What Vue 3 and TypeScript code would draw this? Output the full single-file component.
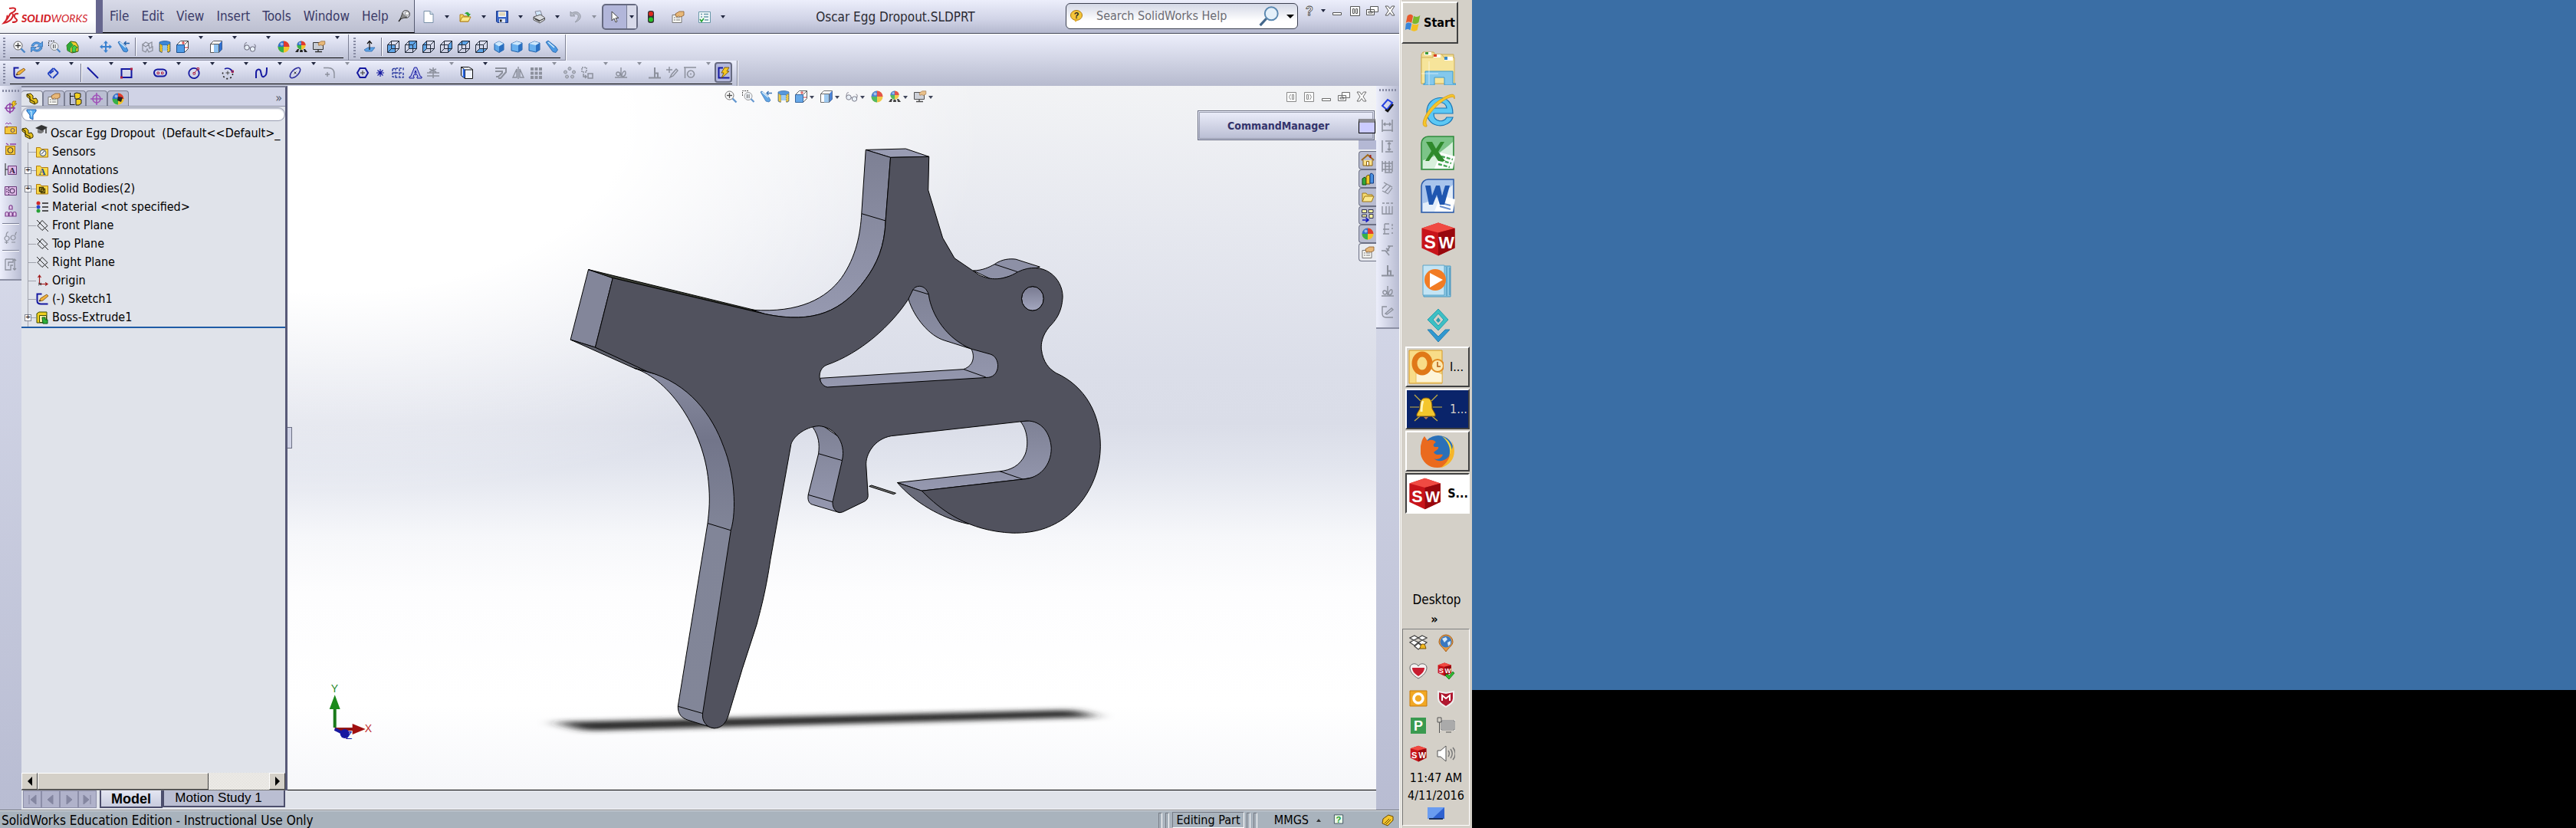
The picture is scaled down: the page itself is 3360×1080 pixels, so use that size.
<script setup lang="ts">
interface Tool { icon: string; label: string; menu?: boolean; dim?: boolean; sep?: boolean }

const GREY = '#8c909c'

function cube(face: string): string {
  const f = (p: string) => `<path d="${p}" fill="#5ea4e6"/>`
  const faces: Record<string, string> = {
    front: f('M.5 5.500h10v10h-10z'),
    back: f('M5.500.5h10v10h-10z'),
    left: f('M.5 5.500l5-5v10l-5 5z'),
    right: f('M10.500 5.500l5-5v10l-5 5z'),
    top: f('M.5 5.500l5-5h10l-5 5z'),
    bottom: f('M.5 15.500l5-5h10l-5 5z'),
  }
  return `${faces[face]}<path d="M.5 5.500h10v10h-10zM5.500.5h10v10h-10zM.5 5.500l5-5M10.500 5.500l5-5M.5 15.500l5-5M10.500 15.500l5-5" fill="none" stroke="#222a3a"/>`
}

const iso = '<path d="M8 1l6 3v8l-6 3.500-6-3.500V4z" fill="#5ca6e8" stroke="#1f5fa8"/><path d="M8 1l6 3-6 3.500L2 4z" fill="#cfe8fc"/><path d="M8 7.500L14 4v8l-6 3.500z" fill="#2a6fc0"/>'
const iso2 = '<path d="M1 4l7-3 7 2v9l-5 3-9-2z" fill="#6ab0ee" stroke="#1f5fa8"/><path d="M1 4l7-3 7 2-5 3z" fill="#cfe8fc"/><path d="M10 6l5-3v9l-5 3z" fill="#2b70c2"/>'
const ball = '<circle cx="8" cy="8" r="7.500" fill="#f1c32c"/><path d="M8 8V.5A7.500 7.500 0 0 1 15.500 8z" fill="#e03a30"/><path d="M8 8V.5A7.500 7.500 0 0 0 .5 8z" fill="#2f6fd0"/><path d="M8 8v7.500A7.500 7.500 0 0 1 .5 8z" fill="#35b04a"/><circle cx="5.500" cy="4.500" r="2" fill="#fff" opacity=".5"/>'
const hand = '<path d="M5 4l5-3h6v5l-4 2-3-1-3 1z" fill="#e8b878" stroke="#8a5a28" stroke-width=".8"/>'
const part = '<path d="M1 2l5-1 3 3v4l4-1 2 3v3l-4 2-6-3V8L1 5z" fill="#e6c21e" stroke="#3a3000"/><path d="M1 2l4 3v4l6 3v3" fill="none" stroke="#3a3000" stroke-width="1.200"/>'
const swCube = '<path d="M8 .5l7.500 2.500v9L8 15.500.5 12V3z" fill="#c8141a"/><path d="M8 .5l7.500 2.500L8 5 .5 3z" fill="#f04a42"/><path d="M8 5l7.500-2v9L8 15.500z" fill="#98080e"/><text x="4.200" y="12" text-anchor="middle" font-family="Liberation Sans, sans-serif" font-weight="700" font-size="8" fill="#fff">S</text><text x="11.700" y="12" text-anchor="middle" font-family="Liberation Sans, sans-serif" font-weight="700" font-size="7.500" fill="#fff">W</text>'
const g = (d: string, w = 1.5) => `<path d="${d}" fill="none" stroke="${GREY}" stroke-width="${w}"/>`
const n = (d: string, w = 1.6) => `<path d="${d}" fill="none" stroke="#1418a0" stroke-width="${w}"/>`
const yellow = (inner: string) => `<path d="M.5 2.500h5l1.500 2h8.500v10.500h-15z" fill="#f8d848" stroke="#b07a10"/>${inner}`

const icons: Record<string, string> = {
  zoomFit: '<circle cx="6.500" cy="6.500" r="5.500" fill="#fff" stroke="#555"/><path d="M6.500 3v7M3 6.500h7" stroke="#333" stroke-width="1.300"/><path d="M10.500 10.500l5 5" stroke="#4a86c8" stroke-width="2.400"/>',
  rotate: '<path d="M1 7c1-5 8-7 12-3l2.500-3v7h-7l2.500-2.500C8 3 5 4 4 7zM15 9c-1 5-8 7-12 3l-2.500 3V8.500h7L5 11c3 2 6 1 7-2z" fill="#5aa0e4" stroke="#1f5fa8" stroke-width=".7"/>',
  zoomArea: '<path d="M.5 7V.5H8" stroke="#333" stroke-dasharray="2 1" fill="none"/><circle cx="8" cy="7.500" r="5" fill="#eef2f8" stroke="#888"/><path d="M6.500 5v5M9 5v5" stroke="#444"/><path d="M11.500 11l4 4" stroke="#4a86c8" stroke-width="2.200"/>',
  section3d: '<path d="M1 6l5-5 7 1 3 5v7l-8 2-6-3z" fill="#f2cc30" stroke="#3a5a10"/><path d="M1 6l5-5 4 5-4 4v5l-4-2z" fill="#2fa83a"/><path d="M8 9l3-3 4 3-2 1v5H8z" fill="#44d04a" stroke="#145a1a" stroke-width=".7"/>',
  pan: '<path d="M8 0l3 3.500H9V7h3.500V5L16 8l-3.500 3V9H9v3.500h2L8 16l-3-3.500h2V9H3.500v2L0 8l3.500-3v2H7V3.500H5z" fill="#3b82d0"/>',
  prev: '<path d="M1 2l2-1 9 8 2 4-2 2-4-1z" fill="#4a98e2" stroke="#1f5fa8" stroke-width=".8"/><path d="M3 2l8 7" stroke="#d8eefc" stroke-width="1.500"/><path d="M9 3.500h7M11.500 1L9 3.500 11.500 6" stroke="#1f5fa8" stroke-width="1.400" fill="none"/>',
  ghost: g('M2 5l4-3 4 2 4-2v6M2 5v8l4 2 2-4 2 4 5-2V8l-4 2-1-5-4 3z', 1.3),
  sectionView: '<path d="M1 2c4-2 10-2 14 0v12l-3 1.500V6H4v9.500L1 14z" fill="#3a86d6" stroke="#1b4f90" stroke-width=".7"/><path d="M5 6h6v7H5z" fill="#8cc4f2"/><path d="M1.500 4v10l3 1V6zM11.500 6v9l3-1V4z" fill="#f0c428" stroke="#6a5000" stroke-width=".6" stroke-dasharray="1.500 1"/>',
  viewOrient: '<path d="M.5 5.500l5-5h10v10l-5 5" fill="#fff" stroke="#444"/><path d="M.5 5.500h10v10h-10z" fill="#4f9ce6" stroke="#1b4f90"/><path d="M10.500 5.500l5-5" stroke="#444"/><path d="M9 1v4M7 3h4M11 9h4" stroke="#d02020"/>',
  display: '<path d="M.5 4.500l4-4h11v11l-4 4H.5z" fill="#fff" stroke="#555"/><path d="M11.500 4.500l4-4v11l-4 4z" fill="#2e6fd0"/><path d="M5 4.500h6.500v11H5z" fill="#8fc2f0"/><path d="M.5 4.500h11v11" fill="none" stroke="#555"/>',
  glasses: '<circle cx="4" cy="9" r="3.200" fill="#e8f0f8" stroke="#667"/><circle cx="11.500" cy="11" r="3.200" fill="#e8f0f8" stroke="#667"/><path d="M1 8c0-5 2-6 3-5M7 9l2 1M14.500 10c1-3 1-5-1-5" fill="none" stroke="#667"/>',
  ball,
  scene: `<g transform="translate(2 0) scale(.75)">${ball}</g><path d="M0 15l3-4h2l-1 4zM6 15l.5-3h3l.5 3zM12 15l-1-4h2l3 4z" fill="#222"/>`,
  viewSettings: `<path d="M.5 2.500h13v9H.5z" fill="#c8ccd4" stroke="#333"/><path d="M3 14.500h9M7 12v2" stroke="#333" stroke-width="1.400"/><g transform="translate(3 0) scale(.8)">${hand}</g>`,
  normalTo: '<path d="M1 12l5-3h9l-4 5H3z" fill="#5ea4e6" stroke="#1f5fa8" stroke-width=".7"/><path d="M8 12V1M5 4l3-3.500L11 4" stroke="#111" fill="none" stroke-width="1.200"/>',
  cFront: cube('front'), cBack: cube('back'), cLeft: cube('left'), cRight: cube('right'), cTop: cube('top'), cBottom: cube('bottom'),
  iso, iso2,
  scope: '<path d="M0 2l3-2 10 8 2.500 4-2.500 3.500-4-1z" fill="#4a98e2" stroke="#1f5fa8" stroke-width=".8"/><path d="M3 2l8 7" stroke="#d8eefc" stroke-width="1.600"/>',
  sketch: '<path d="M7.500 1.500h-6v9c0 3 2 4 5 4h9" fill="none" stroke="#1418a0" stroke-width="2"/><path d="M4 11l2-4 8-5 2 2-7 6z" fill="#f0b23c" stroke="#7a4a10" stroke-width=".8"/><path d="M4 11l1-2 1.500 1.500z" fill="#222"/>',
  dim: '<path d="M1.500 9l7-7M8 15l7-7M1.500 9l5 5.500M9 2l6 6M4 9l5-4" fill="none" stroke="#1e3fc0" stroke-width="1.800"/>',
  line: n('M1 1l14 14', 2),
  rect: `${n('M1.500 3h13v11h-13z', 2)}<path d="M13 1.500h3v3h-3zM0 12.500h3v3H0z" fill="#b02040"/>`,
  slot: `${n('M4.500 3.500h7a4.500 4.500 0 0 1 0 9h-7a4.500 4.500 0 0 1 0-9z', 2)}<path d="M4 7h2.500v2.500H4zM9.500 7H12v2.500H9.500z" fill="none" stroke="#b02040"/>`,
  circle: `<circle cx="8" cy="8.500" r="6.700" fill="none" stroke="#1418a0" stroke-width="1.800"/><path d="M7 7.500h2.500V10H7zM12 1.500h2.500V4H12zM9 7.500l3.500-4" fill="none" stroke="#b02040"/>`,
  arc: `${n('M4 3A7 7 0 0 1 14.500 8')}<path d="M14.500 9A6.500 6.500 0 1 1 3 5" fill="none" stroke="#222" stroke-width="1.600" stroke-dasharray="2 3"/><path d="M8 5.500v5M5.500 8h5" stroke="#444"/><path d="M13 5h2.500v2.500H13z" fill="none" stroke="#b02040"/>`,
  spline: n('M1 15V8c0-5 5-6 6-2s1 8 4 7 4-3 4-12', 2),
  ellipse: `<ellipse cx="8" cy="8" rx="8.500" ry="4.200" transform="rotate(-45 8 8)" fill="none" stroke="#2c2c9c" stroke-width="1.600"/><path d="M6.500 6.500l3 3M9.500 6.500l-3 3" stroke="#444"/>`,
  fillet: g('M1 1.500h6c5 0 8 3 8 8V15M6 7v6M3 10h6', 1.4),
  polygon: `${n('M4.500 2h7L15 8l-3.500 6h-7L1 8z', 2)}<path d="M8 5v6M5 8h6" stroke="#333"/>`,
  point: n('M8 3v10M3 8h10M4.500 4.500l7 7M11.500 4.500l-7 7', 1.2),
  grid: '<path d="M1 3l4-1h10v4M1 3v10l4 1h10V8M1 8h14M5 2v12M10 3v10" stroke="#2c3ca0" stroke-width="1.400" stroke-dasharray="3 1.500" fill="none"/>',
  text: '<path d="M6.500 1h3l5 12h1.500v2h-6v-2h1l-1-2.500H6L5 13h1v2H0v-2h1.500z" fill="#b8bce8" stroke="#1418a0"/><path d="M8 5l-1.200 3.500h2.400z" fill="#fff" stroke="#1418a0"/>',
  trim: g('M0 8h16M0 12h16M8 1v14M3 3l9 4M12 3L3 7'),
  convert: '<path d="M.5.5h10l5 3v12h-10l-5-4z" fill="#eef2fb" stroke="#111"/><path d="M5.500 4v11.500M.5.500l5 3.500h10" stroke="#111" fill="none"/><path d="M4 3v11" stroke="#2a68e8" stroke-width="2.600"/>',
  offset: g('M1 2h14v5l-7 8H5M1 6h9v2l-5 5H2', 2),
  mirror: g('M8 0v16M6 3L1 14h5zM10 3l5 11h-5z', 1.4),
  dots: `<path d="M1 1h4v4H1zM6.500 1h4v4h-4zM12 1h4v4h-4zM1 6.500h4v4H1zM6.500 6.500h4v4h-4zM12 6.500h4v4h-4zM1 12h4v4H1zM6.500 12h4v4h-4zM12 12h4v4h-4z" fill="${GREY}"/>`,
  ring: `<g fill="#b8bcc8" stroke="${GREY}"><circle cx="8" cy="2.500" r="2"/><circle cx="2.500" cy="7" r="2"/><circle cx="13.500" cy="7" r="2"/><circle cx="4.500" cy="13" r="2"/><circle cx="11.500" cy="13" r="2"/></g>`,
  move: `<path d="M1 1h6v6H1z" fill="none" stroke="${GREY}" stroke-width="1.500" stroke-dasharray="2 1"/>${g('M9 9h6v6H9zM3 9v4h4M5 11l2 2-2 2', 1.5)}`,
  relations: g('M0 14h16M8 1v12M5 12c-4 0-4-5-1-5s4 4 1 5zM9 12c0-5 5-9 5-4s-4 5-5 4z', 1.4),
  perp: g('M0 14.500h16M8 1v13M8 8.500h4v6', 2),
  repair: g('M4 0v8M0 4h8M5 14l2-4 6-7 2 2-6 7z', 1.4),
  quick: g('M0 1h16M1.500 1v14M9 5a4.500 4.500 0 1 0 .1 0M9 8.500v2'),
  rapid: '<path d="M7 1.500H1.500v13h14" fill="none" stroke="#1418a0" stroke-width="2"/><path d="M9 1l6 0-3 5h3L5 15l3-7H5z" fill="#f6c820" stroke="#6a4a00" stroke-width=".8"/>',
  doc: '<path d="M2 .5h8l4 4v11H2z" fill="#fff" stroke="#7890a8"/><path d="M10 .5v4h4" fill="#d4e2ee" stroke="#7890a8"/>',
  open: '<path d="M1 14V5h4l1 2h6v7z" fill="#f6d860" stroke="#b08018"/><path d="M1 14l3-6h11l-3 6z" fill="#fbe98a" stroke="#b08018"/><path d="M7 4c2-3 5-3 6 0h2l-3 4-3-4h1.500" fill="#2fa83a"/>',
  save: '<path d="M.5.500h15v15H2l-1.500-1.500z" fill="#3c68c8" stroke="#1c3a88"/><path d="M3 1h10v7H3z" fill="#fff"/><path d="M4 3h8M4 5.500h8" stroke="#b0a060"/><path d="M4 10.500h8v5H4z" fill="#dfe6f4"/><path d="M5 11.500h2.500v3H5z" fill="#222"/>',
  print: '<path d="M3 1l7-1 2 6-7 1z" fill="#cfe4f8" stroke="#889"/><path d="M1 8l9-3 5.500 4v3L9 16l-8-4z" fill="#d8dade" stroke="#555"/><path d="M1 9l8 4 6-3M3 11l6 3" stroke="#222" fill="none"/>',
  undo: '<path d="M1 1v6h6L5 5c4-2 7 0 6 4-.5 2-2 4-4 6 6-2 8-6 7-9-1-4-6-6-11-3z" fill="#b6bac6" stroke="#8c909c" stroke-width=".8"/>',
  pointer: '<path d="M4 1v12l3-3 2 5 2-1-2-4.500h4z" fill="#fff" stroke="#444"/>',
  traffic: '<rect x="4" y="0" width="8" height="16" rx="3" fill="#333"/><circle cx="8" cy="4" r="3" fill="#e02a20"/><circle cx="8" cy="11.500" r="3" fill="#28c028"/>',
  props: `<path d="M1 5.500h12v10H1z" fill="#f6f6f2" stroke="#777"/><path d="M3 9h2M6 9h5M3 12h2M6 12h5" stroke="#777"/>${hand}`,
  list: '<path d="M.5 1.500h15v14H.5z" fill="#f2f8fa" stroke="#6898a8"/><path d="M3 4.500h2M7 4.500h6M3 8h2M7 8h6M8 12h5" stroke="#6898a8" stroke-width="1.300"/><path d="M2 11l2 3 3-4" fill="none" stroke="#20a030" stroke-width="1.600"/>',
  pin: '<circle cx="9.500" cy="5.500" r="5" fill="#d4d6de" stroke="#444"/><path d="M5 4l-3 8 9-3" fill="#888" stroke="#444"/><path d="M3 11l-3 4" stroke="#222" stroke-width="1.400"/><circle cx="11" cy="4.500" r="2.400" fill="#fff" stroke="#555" stroke-width=".6"/>',
  helpBubble: '<ellipse cx="8" cy="7" rx="7.500" ry="6.500" fill="#f4c63a" stroke="#b07a10"/><path d="M5 12l2 4 3-4z" fill="#e0a820"/><text x="8" y="11" text-anchor="middle" font-family="Liberation Sans, sans-serif" font-weight="700" font-size="11" fill="#222">?</text>',
  lens: '<circle cx="10" cy="6" r="5.200" fill="#e4f0fa" stroke="#5a88b0" stroke-width="1.200"/><path d="M6 10l-5 5.500" stroke="#44688c" stroke-width="2"/>',
  helpMark: '<text x="8" y="14" text-anchor="middle" font-family="Liberation Sans, sans-serif" font-weight="700" font-size="16" fill="#fff" stroke="#444" stroke-width=".8">?</text>',
  wMin: '<path d="M2.500 10.500h11v3h-11z" fill="#fff" stroke="#555"/>',
  wPause: '<path d="M2.500 2.500h12v12h-12z" fill="#fff" stroke="#555"/><path d="M5.500 5.500h2v6h-2zM9.500 5.500h2v6h-2z" fill="none" stroke="#555"/>',
  wRestore: '<path d="M5.500 2.500h10v7h-10zM.5 6.500h10v7H.5z" fill="#fff" stroke="#555"/><path d="M3 9h5v2H3z" fill="none" stroke="#555"/>',
  wClose: '<path d="M2 2h3.500L8 5.500 10.500 2H14L10 8l4 6h-3.500L8 10.500 5.500 14H2l4-6z" fill="#fff" stroke="#555"/>',
  wLeft: '<path d="M2.500 2.500h12v12h-12z" fill="#fff" stroke="#777"/><path d="M7.500 5l-2 3.500 2 3.500M9.500 5.500h2v6h-2z" fill="none" stroke="#777"/>',
  wRight: '<path d="M2.500 2.500h12v12h-12z" fill="#fff" stroke="#777"/><path d="M5.500 5.500h2v6h-2zM9.500 5l2 3.500-2 3.500" fill="none" stroke="#777"/>',
  part,
  config: '<path d="M1.500 0v15.500h6M1.500 4.500h5" stroke="#111" fill="none"/><path d="M7 1l3-1 5 1v5l-3 2H8zM9 9l3-1 4 1v5l-3 2H9z" fill="#f2cf20" stroke="#222"/>',
  target: '<circle cx="8" cy="8" r="5" fill="none" stroke="#a050b8" stroke-width="1.600"/><path d="M8 0v16M0 8h16" stroke="#a050b8" stroke-width="1.600"/>',
  dispMgr: `${ball}<path d="M8 5l6 1-2 6-5-2z" fill="#222"/>`,
  funnel: '<path d="M2 2h12v2l-4 5v6l-4-2V9L2 4z" fill="#5ab0f0" stroke="#1a5ab0"/><path d="M6 4h2v7" stroke="#dff2fd" fill="none"/>',
  sensors: yellow('<circle cx="9" cy="9.500" r="4" fill="#eee" stroke="#456"/><path d="M7 11l4-4" stroke="#345"/>'),
  annot: yellow('<text x="8" y="14" text-anchor="middle" font-family="Liberation Serif, serif" font-weight="700" font-size="12" fill="#1c4a90">A</text>'),
  bodies: yellow('<path d="M4.500 6.500h5v5h-5zM6.500 8.500h5v5h-5z" fill="none" stroke="#3a3000" stroke-width="1.300"/>'),
  material: '<circle cx="3" cy="3" r="2.500" fill="#d02828"/><circle cx="3" cy="8" r="2.500" fill="#2848c8"/><circle cx="3" cy="13" r="2.500" fill="#28a038"/><path d="M8 3h8M8 8h8M8 13h8" stroke="#222" stroke-width="1.400"/>',
  plane: '<path d="M8 1.500l7 7-7 6-6-6z M1 1l15 15" fill="none" stroke="#222"/>',
  origin: '<path d="M4.500 1v11M5 12.500h10M2.500 4l2-3 2 3M12 10.500l3 2-3 2" fill="none" stroke="#a01818" stroke-width="1.200"/><path d="M3 11l4 3M7 11l-4 3" stroke="#222"/>',
  extrude: '<path d="M1 3l3-2h10v12l-3 2H1z" fill="#f0d020" stroke="#3a4a00"/><path d="M4.500 5.500h9v9h-9z" fill="#f8f0b0" stroke="#3a4a00"/><path d="M8 8h4v3h3v5H9z" fill="#2fb03a" stroke="#0a5a14"/>',
  cap: '<path d="M0 5l8-4 8 3-7 5z" fill="#333"/><path d="M3 7v4c3 2 6 1 8-1V7L9 9z" fill="#777"/><path d="M14 5v7" stroke="#333" stroke-width="1.500"/>',
  lTarget: '<circle cx="7" cy="9" r="5" fill="none" stroke="#9040a8" stroke-width="1.600"/><path d="M7 2v14M0 9h14" stroke="#9040a8" stroke-width="1.600"/><path d="M11 0h4l-2 3h3l-7 6 2-5H9z" fill="#f6c820" stroke="#7a5a00" stroke-width=".6"/>',
  lTag: '<path d="M.5 6.500h15v9H.5z" fill="#f4c83a" stroke="#a07010"/><circle cx="10.500" cy="11" r="2.500" fill="none" stroke="#5a4a70"/><path d="M1 3l2-2 2 2 2-2 2 2M3 5v3" stroke="#9040a8" fill="none"/>',
  lBox: '<path d="M1.500 4.500h12v11h-12z" fill="#f4c83a" stroke="#a07010"/><circle cx="7.500" cy="10" r="3.500" fill="none" stroke="#333"/><path d="M2 1l3 2M7 2h8" stroke="#9040a8" fill="none" stroke-width="1.500"/>',
  lA: '<path d="M1 0v16M1 8h3" stroke="#222"/><path d="M4.500 3.500h11v11h-11z" fill="#dcb8e4" stroke="#6a3a7a"/><text x="10" y="13" text-anchor="middle" font-family="Liberation Serif, serif" font-weight="700" font-size="11" fill="#302040">A</text>',
  lO: '<path d="M.5 3.500h15v11H.5z" fill="#dcb8e4" stroke="#6a3a7a"/><circle cx="10" cy="9" r="3" fill="none" stroke="#3a2050"/><path d="M5.500 4v10M3 6v6" stroke="#3a2050" stroke-dasharray="2 1"/>',
  lTree: '<path d="M6 6V3c0-3 4-3 4 0v3zM1 15v-4c0-2 4-2 4 0v4zM11 15v-4c0-2 4-2 4 0v4zM6 15v-4c0-2 4-2 4 0v4z" fill="#e4c8ec" stroke="#7a3a8a" stroke-width="1.200"/>',
  lGlass: g('M3 6a3 3 0 1 0 .1 0M11 5a3 3 0 1 0 .1 0M2 6c0-4 2-6 3-5M14 5c0-3 1-4 2-4M0 14h5M2.500 12v4M9 14h5', 1.2),
  lDim: g('M1 1v14h7V9h3M1 1h10v4H5v5M13 1v14M11 3l2-2 2 2M11 13l2 2 2-2', 1.3),
  rDim: '<path d="M1 9l7-8 6 4-7 9z" fill="none" stroke="#2440e0" stroke-width="2"/><path d="M5 14l3 2 7-9" stroke="#111" fill="none" stroke-width="2.500"/>',
  r1: g('M1 0v16M14 0v16M1 14h14M3 6h9M5 4L3 6l2 2M10 4l2 2-2 2'),
  r2: g('M1 0v16M5 1h10M5 15h10M10 3v10M8 5l2-2 2 2M8 11l2 2 2-2'),
  r3: g('M1 0v14M14 0v14M1 3h13M4 7h8M1 11h13M5 0v14M10 0v14M4 15h10'),
  r4: g('M1 9l6-6M4 14l8-9M9 15l5-7M3 1l11 6M1 12l8 4', 1.2),
  r5: g('M1 5v10h5V5M6 15h8V5M10 5v10M1 1h3M6 1h4M12 1h3', 1.3),
  r6: g('M4 1h6M2 8h8M2 14h8M4 1v13M14 1v3M13 7h2M13 13h2', 1.3),
  r7: g('M0 9h5l5 6M7 10l4-7M15 3H8M6 6l4 3', 1.6),
  r10: g('M7 1H1v9c0 3 2 5 5 5h9M5 10l8-7 2 2-8 6z', 1.4),
  home: '<path d="M2 8v7h12V8" fill="#fbe28a" stroke="#8a6010"/><path d="M0 8l8-7 8 7" fill="none" stroke="#a06a18" stroke-width="2"/><path d="M11.500 1v4" stroke="#a02018" stroke-width="2"/><path d="M6.500 9.500h3V15h-3z" fill="#fff" stroke="#8a6010"/>',
  library: '<path d="M1 8l3-2 2 2v8H1z" fill="#30a838" stroke="#0a4a10"/><path d="M6 5l3-2 2 2v10H6z" fill="#f2c82a" stroke="#6a5000"/><path d="M11 2l2-1 2.500 2v11H11z" fill="#4a90e0" stroke="#103a80"/>',
  folder: '<path d="M1 14V3h5l1.500 2H14v3" fill="#f6dc72" stroke="#a07818"/><path d="M1 14l3-7h12l-3 7z" fill="#fbe890" stroke="#a07818"/>',
  palette: '<path d="M.5.500h6v4h-6zM9 .5h6v4H9zM.5 7h6v3h-6zM10 6.500h5v5h-5z" fill="#f4f0a0" stroke="#335"/><path d="M1 14h7M5.500 11L9 14l-3.500 2.500" fill="none" stroke="#1418c0" stroke-width="1.600"/>',
  tag: '<path d="M1 12l1-6 7-5 6 2v5l-7 7z" fill="#f4c62e" stroke="#6a4a00"/><path d="M4 12l6-6M6 13l6-6" stroke="#6a4a00"/>',
  helpBox: '<path d="M.5.500h15v15H.5z" fill="#e8f8e8" stroke="#234"/><text x="8" y="14" text-anchor="middle" font-family="Liberation Sans, sans-serif" font-weight="700" font-size="15" fill="#20a030">?</text>',
}

const tasks: Record<string, string> = {
  flag: '<path d="M3 4c3-3 6-3 8 0L9 14c-3-2-5-2-8 0z" fill="#e8582a"/><path d="M12 4c3 2 6 2 9-1l-2 10c-3 3-6 3-9 1z" fill="#7ab82c"/><path d="M1 15c3-2 5-2 8 0L7 24c-3-2-5-2-7 0z" fill="#3a86d8"/><path d="M10 15c3 2 6 2 9 0l-2 9c-3 2-6 2-9 0z" fill="#f4c020"/>',
  explorer: '<path d="M3 3h14l2 3h24v38H1V6z" fill="#f0dc92" stroke="#c8a850"/><path d="M16 6h12l2 4h14v34H1V10h15z" fill="#f6e49a" stroke="#d0b058"/><path d="M5 3h9v4H5zM17 6h9v4h-9zM31 9h11v5H31z" fill="#fff"/><path d="M6 3h4v3H6z" fill="#3a9a3a"/><path d="M17 6h4v3h-4z" fill="#d83a20"/><path d="M31 9h4v4h-4z" fill="#3a88c8"/><path d="M6 28h36v16h4v2H31V36H18v10H4v-2h2z" fill="#84c8ec" stroke="#3a98cc"/><path d="M11 15v32M1 31h22" stroke="#fff" opacity=".6"/>',
  ie: '<path d="M42 27H17c0 12 14 12 17 5h8c-4 14-33 17-34-7C8 2 42-2 42 27zM17 20h17c-1-10-16-10-17 0z" fill="#5cc8f4" stroke="#1a78b8" stroke-width="1.200"/><path d="M8 44C-4 46 8 20 24 10 38 1 46-1 44 8c0-4-6-4-18 5C12 24 4 38 8 42z" fill="#f6c62a" stroke="#d89a10" stroke-width=".8"/>',
  excel: '<path d="M10 1h33v43H1V10c0-5 4-9 9-9z" fill="#7cc488" stroke="#2f8a3c" stroke-width="1.500"/><path d="M3 32c12-2 26-12 39-24v35H3z" fill="#d8f0dc"/><path d="M26 22l19 5-3 16H18z" fill="#fff"/><path d="M27 27l15 4M25 32l15 4M23 37l15 4" stroke="#4aa858" stroke-width="2.500" stroke-dasharray="5 2"/><path d="M7 8h8l5 9 6-9h5l-8 13 9 12h-9l-6-9-6 9H6l8-13z" fill="#2f8a2c"/>',
  word: '<path d="M10 1h33v43H1V10c0-5 4-9 9-9z" fill="#a8c4ec" stroke="#2a5aa8" stroke-width="1.500"/><path d="M3 32c12-2 26-12 39-24v35H3z" fill="#e4eefa"/><path d="M26 22l19 5-3 16H18z" fill="#fff"/><path d="M27 32l12 3M25 36l14 4" stroke="#6a90d0" stroke-width="2"/><path d="M6 9h7l2 13 5-13h5l3 13 4-13h6l-7 25h-6l-4-13-5 13h-5z" fill="#1f56b0"/>',
  player: '<path d="M4 2h35v40H4z" fill="#8cc8e4" stroke="#4898c0"/><path d="M34 3v38M38 4v36" stroke="#3a88b4"/><path d="M3 1h28v39H3z" fill="#c4e4f4" stroke="#5aa4c8"/><circle cx="19" cy="20" r="14" fill="#f27c24"/><path d="M12 11v19l17-10z" fill="#fff"/>',
  layers: '<path d="M23 2l13 14-13 14-14-14zM23 8l-7 8 7 8 7-8z" fill="#3cc0c4" fill-rule="evenodd" stroke="#2a9cae"/><path d="M23 13l3 4-3 3-3-3z" fill="#2a9cae"/><path d="M9 29h5l9 9 9-9h6L23 45z" fill="#3098d0" stroke="#2a80b0"/>',
  outlook: '<path d="M1 1h43v43H1z" fill="#f8dc88" stroke="#d89a20"/><path d="M10 43V30l18-6 16 8v11z" fill="#fdf4d8" stroke="#e8c060"/><ellipse cx="18" cy="18" rx="10" ry="12" fill="none" stroke="#e07818" stroke-width="7"/><circle cx="38" cy="21" r="8" fill="#fce8b0" stroke="#e08a20" stroke-width="2"/><path d="M38 16v6h4" stroke="#b05a10" fill="none" stroke-width="1.500"/>',
  bell: '<path d="M2 20h12M32 20h12M8 4l8 8M38 4l-8 8M8 38l7-6M38 38l-7-6" stroke="#c8b040" stroke-width="1.200"/><path d="M23 8c7 0 8 6 8 14l4 7v3H11v-3l4-7c0-8 1-14 8-14z" fill="#f4c62c" stroke="#8a5c08"/><path d="M19 12c-2 5-2 10-2 14" stroke="#fff4b8" stroke-width="3" fill="none"/><path d="M20 33h6l-3 3z" fill="#b87858"/>',
  firefox: '<circle cx="23" cy="22" r="20" fill="#2a70b8"/><path d="M28 3c12 6 17 20 8 30 4-10 3-20-8-30z" fill="#f8d838"/><path d="M1 12c1-5 2-6 4-9l4 6c4-2 8-2 11 2-2 1-5 3-2 6h5c1 3-3 4-6 7 3 5 9 2 12 3-3 7-10 7-13 4 8 8 20 4 24-8 2 14-8 21-18 21C4 44-4 27 1 12z" fill="#ea6a1e"/><path d="M39 22c4-4 3-9 1-14 8 14 4 32-14 36 8-5 13-14 13-22z" fill="#f6b62a"/>',
  sw: swCube,
}

const tray: Record<string, string> = {
  dropbox: '<g fill="#fff" stroke="#444" stroke-width="1.300"><path d="M7 2l5 3-6 3-5-3zM17 2l6 3-6 3-5-3zM6 8l6 3-5 4-6-4zM17 8l6 3-5 4-6-4z"/><path d="M7 16l5-4 5 4-5 4z"/></g><path d="M18 13c3 0 3 3 4 6h-8c1-3 1-6 4-6z" fill="#f0b820" stroke="#7a5000"/>',
  globe: '<path d="M12 23c-4-6-9-8-9-13a9 9 0 0 1 18 0c0 5-5 7-9 13z" fill="#e89a40" stroke="#a8601a"/><circle cx="12" cy="10" r="7.500" fill="#3a78c0"/><path d="M7 6l5-2 2 3-4 4zM14 11l4-2v4l-3 3z" fill="#d4e8f8"/>',
  heart: '<path d="M12 22C5 18 1 13 1 8c0-6 9-7 11-2 2-5 11-4 11 2 0 5-4 10-11 14z" fill="#f4f0f0" stroke="#666"/><path d="M12 19c-5-3-8-7-8-11h16c0 4-3 8-8 11z" fill="#c81c30"/>',
  swOk: `<g transform="translate(1 1) scale(1.150)">${swCube}</g><path d="M11 18l3-2 2 3 5-6 2 2-7 8z" fill="#30c030" stroke="#0a6a14" stroke-width=".8"/>`,
  out: '<path d="M1 2h22v20H1z" fill="#f2a824" stroke="#c87a08"/><circle cx="12" cy="12" r="6" fill="none" stroke="#fff" stroke-width="3.500"/>',
  shield: '<path d="M2 3l10 2 10-2v9c0 5-5 8-10 11C7 20 2 17 2 12z" fill="#b01830" stroke="#eee" stroke-width="2"/><path d="M7 15V8l5 4 5-4v7" fill="none" stroke="#fff" stroke-width="2"/>',
  pBox: '<path d="M2 1h20v21H2z" fill="#3a9a50"/><text x="12" y="18" text-anchor="middle" font-family="Liberation Sans, sans-serif" font-weight="700" font-size="18" fill="#fff">P</text>',
  net: '<path d="M6 5h17v12H6z" fill="#aaa" stroke="#fff" stroke-width="2"/><path d="M6 5h17v12H6zM12 20h7M1 1h5v6H1zM3.500 7v14" fill="none" stroke="#555"/>',
  sw: `<g transform="translate(1 1) scale(1.380)">${swCube}</g>`,
  vol: '<path d="M1 8h4l7-6v20l-7-6H1z" fill="#fff" stroke="#555"/><path d="M15 8c2 3 2 5 0 8M18 6c3 4 3 8 0 12M21 4c4 5 4 11 0 16" fill="none" stroke="#777" stroke-width="1.400"/>',
}

const menus = ['File', 'Edit', 'View', 'Insert', 'Tools', 'Window', 'Help']

const standardTools: Tool[] = [
  { icon: 'doc', label: 'New', menu: true }, { icon: 'open', label: 'Open', menu: true },
  { icon: 'save', label: 'Save', menu: true }, { icon: 'print', label: 'Print', menu: true },
  { icon: 'undo', label: 'Undo', menu: true, dim: true },
]

const viewTools: Tool[] = [
  { icon: 'zoomFit', label: 'Zoom to Fit' }, { icon: 'rotate', label: 'Rotate View' }, { icon: 'zoomArea', label: 'Zoom to Area' },
  { icon: 'section3d', label: '3D Drawing View', menu: true }, { icon: 'pan', label: 'Pan' }, { icon: 'prev', label: 'Previous View' },
  { icon: 'ghost', label: 'Shadows', sep: true }, { icon: 'sectionView', label: 'Section View' },
  { icon: 'viewOrient', label: 'View Orientation', menu: true }, { icon: 'display', label: 'Display Style', menu: true },
  { icon: 'glasses', label: 'Hide/Show Items', menu: true }, { icon: 'ball', label: 'Edit Appearance' },
  { icon: 'scene', label: 'Apply Scene' }, { icon: 'viewSettings', label: 'View Settings', menu: true },
]

const standardViews: Tool[] = [
  { icon: 'normalTo', label: 'Normal To' }, { icon: 'cFront', label: 'Front', sep: true }, { icon: 'cBack', label: 'Back' },
  { icon: 'cLeft', label: 'Left' }, { icon: 'cRight', label: 'Right' }, { icon: 'cTop', label: 'Top' }, { icon: 'cBottom', label: 'Bottom' },
  { icon: 'iso', label: 'Isometric' }, { icon: 'iso2', label: 'Trimetric' }, { icon: 'iso2', label: 'Dimetric' }, { icon: 'scope', label: 'Orientation' },
]

const sketchTools: Tool[] = [
  { icon: 'sketch', label: 'Sketch', menu: true }, { icon: 'dim', label: 'Smart Dimension', menu: true },
  { icon: 'line', label: 'Line', menu: true, sep: true }, { icon: 'rect', label: 'Rectangle', menu: true },
  { icon: 'slot', label: 'Slot', menu: true }, { icon: 'circle', label: 'Circle', menu: true }, { icon: 'arc', label: 'Arc', menu: true },
  { icon: 'spline', label: 'Spline', menu: true }, { icon: 'ellipse', label: 'Ellipse', menu: true },
  { icon: 'fillet', label: 'Fillet', menu: true, dim: true }, { icon: 'polygon', label: 'Polygon' }, { icon: 'point', label: 'Point' },
  { icon: 'grid', label: 'Plane' }, { icon: 'text', label: 'Text' }, { icon: 'trim', label: 'Trim', menu: true, dim: true },
  { icon: 'convert', label: 'Convert Entities', menu: true }, { icon: 'offset', label: 'Offset', dim: true },
  { icon: 'mirror', label: 'Mirror', dim: true }, { icon: 'dots', label: 'Linear Pattern', menu: true, dim: true },
  { icon: 'ring', label: 'Circular Pattern', dim: true }, { icon: 'move', label: 'Move', menu: true, dim: true },
  { icon: 'relations', label: 'Relations', menu: true, dim: true }, { icon: 'perp', label: 'Add Relation', dim: true },
  { icon: 'repair', label: 'Repair', dim: true }, { icon: 'quick', label: 'Quick Snaps', menu: true, dim: true },
]

const headsUp: Tool[] = [
  { icon: 'zoomFit', label: 'Zoom to Fit' }, { icon: 'zoomArea', label: 'Zoom to Area' }, { icon: 'prev', label: 'Previous View' },
  { icon: 'sectionView', label: 'Section View' }, { icon: 'viewOrient', label: 'View Orientation', menu: true },
  { icon: 'display', label: 'Display Style', menu: true }, { icon: 'glasses', label: 'Hide/Show', menu: true },
  { icon: 'ball', label: 'Edit Appearance' }, { icon: 'scene', label: 'Apply Scene', menu: true },
  { icon: 'viewSettings', label: 'View Settings', menu: true },
]

const leftTools: Tool[] = [
  { icon: 'lTarget', label: 'Auto Dimension' }, { icon: 'lTag', label: 'Basic Location' }, { icon: 'lBox', label: 'Basic Size' },
  { icon: 'lA', label: 'Datum' }, { icon: 'lO', label: 'Geometric Tolerance' }, { icon: 'lTree', label: 'Pattern Feature' },
  { icon: 'lGlass', label: 'Tolerance Status', sep: true }, { icon: 'lDim', label: 'Copy Scheme', sep: true },
]
const rightTools = ['rDim', 'r1', 'r2', 'r3', 'r4', 'r5', 'r6', 'r7', 'perp', 'relations', 'r10']
const taskPane = ['home', 'library', 'folder', 'palette', 'ball', 'props']
const managerTabs = ['part', 'props', 'config', 'target', 'dispMgr']

const tree = [
  { icon: 'sensors', text: 'Sensors' }, { icon: 'annot', text: 'Annotations', plus: true },
  { icon: 'bodies', text: 'Solid Bodies(2)', plus: true }, { icon: 'material', text: 'Material <not specified>' },
  { icon: 'plane', text: 'Front Plane' }, { icon: 'plane', text: 'Top Plane' }, { icon: 'plane', text: 'Right Plane' },
  { icon: 'origin', text: 'Origin' }, { icon: 'sketch', text: '(-) Sketch1' }, { icon: 'extrude', text: 'Boss-Extrude1', plus: true },
]

const pinned = ['explorer', 'ie', 'excel', 'word', 'sw', 'player', 'layers']
const running = [
  { icon: 'outlook', text: 'I...', state: '' }, { icon: 'bell', text: '1...', state: 'alert' },
  { icon: 'firefox', text: '', state: '' }, { icon: 'sw', text: 'S...', state: 'current' },
]
const trayIcons = Object.keys(tray)
</script>

<template>
  <div class="screens">
    <section class="primary">
      <div class="app">
        <header class="title-bar">
          <div class="brand">
            <svg width="123" height="30" viewBox="0 0 123 30" aria-label="SolidWorks">
              <path d="M10 2c4-1 9-1 8 2-1 2-4 4-6 4 3 0 4 2 2 6-2 4-6 6-11 7 4-4 7-9 9-13M3 21c3-1 5-9 4-10" fill="none" stroke="#d2232a" stroke-width="2" />
              <path d="M22 9c-4-1-6 1-5 4s4 3 3 5c-1 2-3 2-6 2" fill="none" stroke="#d2232a" stroke-width="2" />
              <text x="26" y="20" class="brand-text"><tspan font-weight="900">SOLID</tspan>WORKS</text>
            </svg>
          </div>
          <nav class="menus">
            <button v-for="m in menus" :key="m" type="button">{{ m }}</button>
            <svg class="ic" viewBox="0 0 16 16" v-html="icons.pin" />
          </nav>
          <div class="standard">
            <span v-for="t in standardTools" :key="t.label" class="std">
              <button type="button" :aria-label="t.label"><svg class="ic" viewBox="0 0 16 16" v-html="icons[t.icon]" /></button>
              <i class="arrow" :class="{ dim: t.dim }" />
            </span>
            <button type="button" class="select-tool" aria-label="Select">
              <svg class="ic" viewBox="0 0 16 16" v-html="icons.pointer" /><span><i class="arrow" /></span>
            </button>
            <button type="button" class="wide" aria-label="Rebuild"><svg class="ic" viewBox="0 0 16 16" v-html="icons.traffic" /></button>
            <button type="button" class="wide" aria-label="File Properties"><svg class="ic" viewBox="0 0 16 16" v-html="icons.props" /></button>
            <button type="button" class="wide" aria-label="Options"><svg class="ic" viewBox="0 0 16 16" v-html="icons.list" /></button>
            <i class="arrow tail" />
          </div>
          <h1>Oscar Egg Dropout.SLDPRT</h1>
          <label class="search">
            <svg class="ic" viewBox="0 0 16 16" v-html="icons.helpBubble" />
            <input type="text" placeholder="Search SolidWorks Help" aria-label="Search SolidWorks Help" />
            <svg class="ic lens" viewBox="0 0 16 16" v-html="icons.lens" />
            <i class="arrow big" />
          </label>
          <div class="win-controls">
            <button type="button" aria-label="Help"><svg class="ic" viewBox="0 0 16 16" v-html="icons.helpMark" /></button>
            <i class="arrow" />
            <button v-for="w in ['wMin', 'wPause', 'wRestore', 'wClose']" :key="w" type="button" :aria-label="w">
              <svg class="ic" viewBox="0 0 16 16" v-html="icons[w]" />
            </button>
          </div>
        </header>

        <div class="toolbars">
          <div class="bar-row">
            <div v-for="(bar, i) in [viewTools, standardViews]" :key="i" class="bar">
              <span class="grip" />
              <div class="tools">
                <template v-for="t in bar" :key="t.label">
                  <span v-if="t.sep" class="sep" />
                  <button type="button" :aria-label="t.label"><svg class="ic" viewBox="0 0 16 16" v-html="icons[t.icon]" /></button>
                  <span v-if="t.menu" class="drop"><i class="arrow" :class="{ dim: t.dim }" /></span>
                </template>
              </div>
            </div>
          </div>
          <div class="bar-row second">
            <div class="bar">
              <span class="grip" />
              <div class="tools">
                <template v-for="t in sketchTools" :key="t.label">
                  <span v-if="t.sep" class="sep" />
                  <button type="button" :aria-label="t.label"><svg class="ic" viewBox="0 0 16 16" v-html="icons[t.icon]" /></button>
                  <span v-if="t.menu" class="drop"><i class="arrow" :class="{ dim: t.dim }" /></span>
                </template>
                <button type="button" class="pressed" aria-label="Rapid Sketch"><svg class="ic" viewBox="0 0 16 16" v-html="icons.rapid" /></button>
              </div>
            </div>
          </div>
        </div>

        <main class="work">
          <aside class="side left">
            <div class="side-bar">
              <span class="grip flat" />
              <template v-for="t in leftTools" :key="t.label">
                <hr v-if="t.sep" />
                <button type="button" :aria-label="t.label"><svg class="ic" viewBox="0 0 16 16" v-html="icons[t.icon]" /></button>
              </template>
            </div>
          </aside>

          <div class="center">
            <div class="panes">
              <section class="manager">
                <div class="manager-tabs">
                  <button v-for="(t, i) in managerTabs" :key="t" type="button" :class="{ on: i === 0 }" :aria-label="t">
                    <svg class="ic" viewBox="0 0 16 16" v-html="icons[t]" />
                  </button>
                  <span class="more">»</span>
                </div>
                <label class="filter">
                  <svg class="ic" viewBox="0 0 16 16" v-html="icons.funnel" />
                  <input type="text" aria-label="Filter" />
                </label>
                <div class="root">
                  <svg class="ic" viewBox="0 0 16 16" v-html="icons.part" />
                  <svg class="ic cap" viewBox="0 0 16 16" v-html="icons.cap" />
                  <span>Oscar Egg Dropout&nbsp; (Default&lt;&lt;Default&gt;_</span>
                </div>
                <ul class="tree">
                  <li v-for="node in tree" :key="node.text">
                    <span class="branch"><b v-if="node.plus">+</b></span>
                    <svg class="ic" viewBox="0 0 16 16" v-html="icons[node.icon]" />
                    <span>{{ node.text }}</span>
                  </li>
                </ul>
                <div class="rollback" />
                <div class="scroll">
                  <button type="button" aria-label="Scroll left"><i class="tri left" /></button>
                  <div class="track"><div class="thumb" /></div>
                  <button type="button" aria-label="Scroll right"><i class="tri right" /></button>
                </div>
              </section>

              <section class="viewport">
                <svg class="model" viewBox="375 112 1420 919" aria-label="Model">
                  <defs>
                    <filter id="soft" x="-10%" y="-200%" width="120%" height="500%"><feGaussianBlur stdDeviation="12 3" /></filter>
                    <linearGradient id="side" x1="0" y1="0" x2="0" y2="1">
                      <stop offset="0" stop-color="#7d8094" /><stop offset="1" stop-color="#9699b0" />
                    </linearGradient>
                    <linearGradient id="legSide" x1="0" y1="0" x2="0" y2="1">
                      <stop offset="0" stop-color="#8a8da2" /><stop offset=".2" stop-color="#72758a" /><stop offset=".45" stop-color="#818598" /><stop offset="1" stop-color="#828698" />
                    </linearGradient>
                    <linearGradient id="hole" x1="0" y1="0" x2="0" y2="1">
                      <stop offset="0" stop-color="#787a90" /><stop offset="1" stop-color="#a4a7bf" />
                    </linearGradient>
                  </defs>
                  <path d="M722 943L1400 927L1432 936L764 954z" fill="#282828" filter="url(#soft)" />
                  <g transform="translate(700 170) scale(.49744 .34439)" class="solid">
                    <path d="M135 528L199 560L153 823L88 794z" fill="#83869a" />
                    <path d="M135 528L575 683L610 700L199 560z" fill="#3c4036" />
                    <path d="M88 794L153 823L305 922L255 902z" fill="#5e606c" />
                    <path d="M863 74L968 70L1029 100L928 103z" fill="#999cb3" />
                    <path d="M565 681C690 694 760 636 799 560C838 480 849 392 852 316L863 74L928 103L915 343C913 440 892 508 862 566C802 686 727 735 600 697z" fill="url(#side)" />
                    <path d="M852 316L915 343" />
                    <path d="M1145 532C1170 532 1188 518 1201 508C1220 488 1242 486 1257 489L1320 518L1262 545L1200 570z" fill="#8d90a6" />
                    <path d="M1201 508L1262 537" />
                    <path d="M255 902C350 945 438 1140 450 1330C455 1400 452 1440 448 1490L370 2184C370 2215 380 2228 396 2236L465 2267L540 1300L400 960z" fill="url(#legSide)" />
                    <path d="M448 1490L509 1517M370 2184L435 2211" />
                    <path d="M724 1126C740 1160 742 1190 739 1226L712 1382C709 1410 718 1418 725 1420L795 1450L830 1200L740 1110z" fill="url(#side)" />
                    <path d="M739 1226L801 1252M712 1382L776 1409" />
                    <path d="M1269 1104C1290 1140 1290 1200 1281 1230C1268 1272 1243 1289 1215 1293L946 1336L1010 1367L1275 1323L1370 1300V1090z" fill="url(#side)" />
                    <path d="M1215 1293L1275 1323" />
                    <path d="M946 1336C990 1410 1060 1470 1130 1492L1160 1490L1010 1367z" fill="#686a79" />
                    <path d="M872 1350L878 1346L942 1376L936 1380z" fill="#777" />
                    <path d="M975 640C990 710 1030 780 1070 797L1140 829C1148 850 1150 890 1120 906L744 940L740 985L1230 950V840L1040 580L975 590z" fill="url(#side)" />
                    <path d="M987 604L1028 622M1120 906L1178 936" />
                    <ellipse cx="1301" cy="638" rx="29" ry="46" fill="url(#hole)" />
                    <path fill="#51525e" fill-rule="evenodd" d="M199 560L600 697C727 735 802 686 862 566C892 508 913 440 915 343L928 103L1029 100L1027 227L1065 408L1096 485L1160 548C1190 570 1225 570 1262 537C1330 490 1380 560 1380 632C1378 690 1362 720 1345 745C1325 780 1323 810 1324 830C1328 880 1345 905 1362 920C1440 970 1480 1080 1479 1200C1478 1340 1420 1440 1375 1480C1330 1520 1290 1527 1250 1527C1130 1520 1060 1440 1010 1367L1275 1323C1320 1320 1350 1270 1350 1205C1348 1150 1325 1100 1285 1102L930 1159C885 1170 862 1230 864 1270L869 1385C869 1395 866 1402 860 1407L803 1447C790 1455 775 1440 776 1409L801 1252C812 1180 780 1125 740 1121C700 1125 672 1165 667 1190L613 1626C600 1750 590 1800 577 1873L539 2042L503 2216C495 2255 480 2267 465 2267C445 2265 432 2240 435 2210L509 1516C525 1440 518 1300 490 1200C460 1080 400 960 290 915L153 823ZM987 604C995 586 1019 583 1028 622C1035 700 1075 790 1140 829L1190 849C1217 860 1217 932 1185 937L762 974C736 965 735 905 760 890C850 845 930 740 975 640ZM1272 638a29 46 0 1 0 58 0a29 46 0 1 0-58 0" />
                  </g>
                  <g class="triad">
                    <path d="M436 950V925" stroke="#1a7a1a" stroke-width="4" /><path d="M429 926L436 907L443 926z" fill="#1a8a1a" />
                    <path d="M436 952H460" stroke="#901010" stroke-width="4" /><path d="M459 945L476 952L459 959z" fill="#a01010" />
                    <circle cx="449" cy="958" r="6" fill="#1818a0" /><path d="M436 952L446 957" stroke="#1818a0" stroke-width="4" />
                    <text x="431" y="904" fill="#2a8a2a">Y</text><text x="475" y="956" fill="#c03030">X</text><text x="450" y="965" fill="#1818a0">Z</text>
                  </g>
                </svg>
                <div class="view-head">
                  <div class="heads-up">
                    <template v-for="t in headsUp" :key="t.label">
                      <button type="button" :aria-label="t.label"><svg class="ic" viewBox="0 0 16 16" v-html="icons[t.icon]" /></button>
                      <i v-if="t.menu" class="arrow" />
                    </template>
                  </div>
                  <div class="doc-controls">
                    <button v-for="w in ['wLeft', 'wRight', 'wMin', 'wRestore', 'wClose']" :key="w" type="button" :aria-label="w">
                      <svg class="ic" viewBox="0 0 16 16" v-html="icons[w]" />
                    </button>
                  </div>
                </div>
                <div class="command-manager">CommandManager<span /></div>
                <div class="task-pane">
                  <button v-for="(t, i) in taskPane" :key="t" type="button" :class="{ on: i === 5 }" :aria-label="t">
                    <svg class="ic" viewBox="0 0 16 16" v-html="icons[t]" />
                  </button>
                </div>
                <span class="splitter" />
              </section>
            </div>

            <footer class="tabs">
              <button v-for="p in ['M6 4v12M15 4l-7 6 7 6z', 'M13 4l-7 6 7 6z', 'M7 4l7 6-7 6z', 'M14 4v12M5 4l7 6-7 6z']" :key="p" type="button" class="nav" aria-label="Scroll tabs">
                <svg width="20" height="20" viewBox="0 0 20 20"><path :d="p" fill="#8486a0" stroke="#8486a0" /></svg>
              </button>
              <button type="button" class="tab on">Model</button>
              <button type="button" class="tab">Motion Study 1</button>
            </footer>
          </div>

          <aside class="side right">
            <div class="side-bar">
              <span class="grip flat" />
              <button v-for="t in rightTools" :key="t" type="button" :aria-label="t"><svg class="ic" viewBox="0 0 16 16" v-html="icons[t]" /></button>
            </div>
          </aside>
        </main>

        <div class="status">
          <span class="grow">SolidWorks Education Edition - Instructional Use Only</span>
          <i class="notch" /><i class="notch" />
          <span class="cell">Editing Part</span>
          <i class="notch" /><i class="notch" />
          <span class="units">MMGS</span>
          <i class="arrow up" />
          <svg class="ic help" viewBox="0 0 16 16" v-html="icons.helpBox" />
          <svg class="ic tag" viewBox="0 0 16 16" v-html="icons.tag" />
        </div>
      </div>

      <nav class="taskbar">
        <button type="button" class="start"><svg width="24" height="26" viewBox="0 0 24 28" v-html="tasks.flag" />Start</button>
        <button v-for="p in pinned" :key="p" type="button" class="pin" :aria-label="p">
          <svg width="46" height="46" :viewBox="p === 'sw' ? '0 0 16 16' : '0 0 46 46'" v-html="tasks[p]" />
        </button>
        <button v-for="r in running" :key="r.icon" type="button" class="run" :class="r.state" :aria-label="r.icon">
          <svg width="46" height="46" :viewBox="r.icon === 'sw' ? '0 0 16 16' : '0 0 46 46'" v-html="tasks[r.icon]" /><span v-if="r.text">{{ r.text }}</span>
        </button>
        <div class="desk-label">Desktop</div>
        <div class="desk-more">»</div>
        <div class="tray">
          <div class="tray-icons">
            <svg v-for="t in trayIcons" :key="t" width="24" height="24" viewBox="0 0 24 24" v-html="tray[t]" />
          </div>
          <time>11:47 AM</time>
          <time>4/11/2016</time>
          <svg width="22" height="18" viewBox="0 0 22 18"><path d="M0 1h22v15H0z" fill="#2f62d0" /><path d="M0 1h22L6 16H0z" fill="#6a9cf0" /><path d="M2 16h18" stroke="#1a3060" stroke-width="2" /></svg>
        </div>
      </nav>
    </section>
    <section class="secondary"><div class="desktop" /></section>
  </div>
</template>

<style>
html, body { margin: 0; background: #000; }
</style>

<style scoped>
.screens { display: flex; min-height: 100vh; background: #000; color: #000; font: 16px/20px "DejaVu Sans Condensed", "DejaVu Sans", sans-serif; }
.screens * { box-sizing: border-box; }
button { padding: 0; border: 0; background: none; color: inherit; font: inherit; display: flex; align-items: center; justify-content: center; flex: none; }
input { min-width: 0; flex: 1; border: 0; padding: 0; background: none; font: inherit; outline: none; }
.ic { width: 16px; height: 16px; flex: none; overflow: visible; }
.primary { flex: 4 1 0; min-width: 0; display: flex; }
.secondary { flex: 3 1 0; min-width: 0; }
.desktop { background: #3a6ea5; aspect-ratio: 16 / 10; }
.app { flex: 1; min-width: 0; display: flex; flex-direction: column; background: #e0e3ea; overflow: hidden; }
.arrow { width: 0; height: 0; flex: none; border: 3px solid transparent; border-top: 4px solid #222840; border-bottom: 0; }
.arrow.dim { border-top-color: #8c909c; }
.arrow.big { border-width: 5px 5px 0; border-top-color: #000; }
.arrow.up { border: 3px solid transparent; border-bottom: 4px solid #333; border-top: 0; }

.title-bar { height: 44px; display: flex; background: linear-gradient(#eceefb, #d0d3e6 60%, #b4b8ce); border-bottom: 1px solid #44485a; }
.brand { width: 134px; flex: none; border-right: 9px solid #66668e; background: linear-gradient(#fff 60%, #eef0f4); padding: 9px 0 0 2px; }
.brand svg { display: block; overflow: visible; }
.brand-text { font: italic 400 14px Lato, sans-serif; fill: #d2232a; }
.menus { display: flex; align-items: center; gap: 16px; padding: 0 4px 0 9px; background: linear-gradient(#d8dae8, #bcbfd0); border-right: 1px solid #555a70; border-bottom: 1px solid #000; color: #3a3a68; font-size: 17px; }
.menus .ic { margin-left: -3px; }
.standard { display: flex; align-items: center; padding-left: 10px; }
.std { display: flex; align-items: center; width: 48px; gap: 13px; }
.std:nth-of-type(5) { width: 42px; }
.select-tool { width: 47px; height: 34px; border: 2px solid #666a80; border-radius: 5px; background: #b2b6da; }
.select-tool .ic { flex: 1; }
.select-tool span { width: 13px; height: 30px; border-left: 1px solid #777c94; background: #d8daea; display: flex; align-items: center; justify-content: center; }
.wide { width: 35px; }
.tail { margin-left: 3px; }
h1 { flex: 1; margin: 0; text-align: center; font-size: 17px; line-height: 44px; font-weight: 400; color: #2c2c34; white-space: nowrap; }
.search { width: 303px; height: 34px; margin: 4px 4px 0 0; display: flex; align-items: center; gap: 10px; padding: 0 4px 0 5px; border: 1px solid #3c4050; border-radius: 6px; background: linear-gradient(#d4d8e6, #fff 70%); }
.search input { padding-left: 8px; font-size: 16px; }
.search input::placeholder { color: #6c6c74; opacity: 1; }
.lens { width: 26px; height: 26px; }
.win-controls { display: flex; align-items: center; justify-content: flex-end; height: 28px; width: 128px; gap: 7px; padding-right: 4px; }

.toolbars { background: linear-gradient(#eceefb, #b6bace); height: 68px; border-top: 1px solid #fff; }
.bar-row { display: flex; height: 34px; }
.bar { display: flex; background: linear-gradient(#eceefb, #cfd3e6 60%, #bcc0d4); border-right: 1px solid #7c8094; border-bottom: 1px solid #8c90a4; padding-right: 6px; box-shadow: 1px 0 #fff; }
.bar + .bar { padding-left: 2px; }
.grip { width: 3px; height: 26px; margin: 4px 5px 0 4px; background: repeating-linear-gradient(#888ca4 0 2px, transparent 2px 4px); }
.tools { display: flex; align-items: center; height: 30px; border-bottom: 1px solid #000; margin: 1px 0 0 1px; }
.tools button { width: 23px; height: 28px; }
.tools .drop { width: 21px; padding-left: 10px; }
.sep { width: 8px; display: flex; justify-content: center; }
.sep::after { content: ""; width: 1px; height: 24px; background: #70748c; box-shadow: 1px 0 #fff; }
.second .bar { height: 33px; border-bottom: 0; }
.tools button.pressed { height: 27px; border: 2px solid #666a80; border-radius: 4px; background: #b4b8dc; }

.work { flex: 1; display: flex; min-height: 0; }
.side { flex: none; background: linear-gradient(#dfe2f0, #b8bcd2); }
.side.left { width: 28px; }
.side.right { width: 30px; }
.side-bar { display: flex; flex-direction: column; align-items: center; background: linear-gradient(90deg, #eceefb, #b8bcd2); border-bottom: 2px solid #8c90a4; }
.left .side-bar { height: 254px; }
.right .side-bar { height: 317px; }
.side-bar button { width: 24px; height: 27px; }
.grip.flat { width: 22px; height: 3px; margin: 5px 0 6px; background: repeating-linear-gradient(90deg, #888ca4 0 2px, transparent 2px 4px); }
.right .grip.flat { margin: 4px 0; }
hr { width: 22px; height: 2px; margin: 3px 0; border: 0; background: #777c94; border-bottom: 1px solid #fff; }
.center { flex: 1; min-width: 0; display: flex; flex-direction: column; }
.panes { flex: 1; display: flex; min-height: 0; }

.manager { width: 347px; flex: none; display: flex; flex-direction: column; background: #e0e3ea; border-right: 3px solid #585a78; border-top: 2px solid #7c8094; overflow: hidden; }
.manager-tabs { display: flex; height: 25px; padding-top: 4px; background: #d0d3e6; border-bottom: 1px solid #8c90a4; align-items: stretch; }
.manager-tabs button { width: 28px; border: 1px solid #7c8094; border-radius: 4px 4px 0 0; background: #babed2; border-bottom: 0; }
.manager-tabs button.on { background: #e0e3ea; border-left: 0; }
.more { margin-left: auto; padding-right: 4px; color: #55586c; }
.filter { height: 18px; margin-top: 1px; display: flex; align-items: center; border: 1px solid #9a9eb2; border-radius: 9px; background: #fff; padding-left: 4px; box-shadow: inset 0 1px 2px #b8bccc; flex: none; }
.root { display: flex; align-items: center; height: 24px; margin-top: 4px; gap: 2px; white-space: nowrap; flex: none; }
.cap { align-self: flex-start; }
.root span { margin-left: 2px; }
.tree { list-style: none; margin: 0; padding: 0; }
.tree li { display: flex; align-items: center; height: 24px; white-space: nowrap; }
.tree .ic { margin-right: 5px; }
.branch { width: 19px; align-self: stretch; display: flex; align-items: center; padding-left: 4px; background: linear-gradient(90deg, transparent 8px, #a0a2ac 8px 9px, transparent 9px), linear-gradient(transparent 12px, #a0a2ac 12px 13px, transparent 13px) 8px 0 / 11px 24px no-repeat; }
.branch b { width: 9px; height: 9px; border: 1px solid #808490; background: #fff; font: 11px/7px "Liberation Mono", monospace; text-align: center; }
.rollback { height: 2px; background: #1f5ba6; }
.scroll { margin-top: auto; height: 23px; display: flex; border-bottom: 1px solid #777; flex: none; }
.scroll button { width: 21px; background: #d4d0c8; border: 1px solid; border-color: #fff #404040 #404040 #fff; }
.track { flex: 1; background: repeating-conic-gradient(#fff 0 25%, #d4d0c8 0 50%) 0 0 / 2px 2px; }
.thumb { width: 74%; height: 100%; background: #d4d0c8; border: 1px solid; border-color: #fff #404040 #404040 #fff; }
.tri { border: 6px solid transparent; }
.tri.left { border-right-color: #000; border-left: 0; }
.tri.right { border-left-color: #000; border-right: 0; }

.viewport { flex: 1; min-width: 0; position: relative; overflow: hidden; display: flex; flex-direction: column; align-items: flex-end; border-bottom: 1px solid #000;
  background: radial-gradient(ellipse 60% 52% at 4% 6%, #fff 45%, transparent), linear-gradient(#f2f3f5, #e6e8ef 20%, #dbdee9 40%, #dadde8 48%, #e2e5ee 54%, #f6f7fa 64%, #fdfdfe 72%, #fff 88%, #f6f7fa); }
.model { position: absolute; inset: 0; width: 100%; height: 100%; }
.solid path, .solid ellipse { stroke: #000; stroke-width: 1px; vector-effect: non-scaling-stroke; stroke-linejoin: round; }
.triad text { font: 14px "Liberation Sans", sans-serif; }
.view-head { position: relative; width: 100%; height: 32px; display: flex; align-items: center; justify-content: flex-end; padding: 0 8px 4px 0; }
.heads-up { position: absolute; left: 566px; display: flex; align-items: center; opacity: .85; }
.heads-up button { width: 23px; height: 20px; }
.heads-up .arrow { margin: 2px 4px 0 0; }
.doc-controls { display: flex; opacity: .85; }
.doc-controls button { width: 23px; height: 20px; }
.command-manager { position: relative; width: 231px; height: 39px; margin-right: 2px; line-height: 38px; text-align: center; padding-right: 20px; font-weight: 700; font-size: 14px; color: #34346c; border: 1px solid #6c7084; outline: 1px solid #9a9eb0; outline-offset: -3px; background: linear-gradient(#eceefb, #b8bcd2); }
.command-manager span { position: absolute; right: -2px; top: 10px; width: 22px; height: 19px; border: 1px solid #000; border-top: 5px solid #8c8c94; background: #ccccff; }
.task-pane { display: flex; flex-direction: column; padding-top: 14px; background: linear-gradient(#b4b8d4, #b4b8d4) no-repeat; background-size: 100% 12px; }
.task-pane button { width: 23px; height: 24px; border: 1px solid #6c7084; border-right: 0; border-radius: 4px 0 0 4px; background: #b8bcd0; }
.task-pane button.on { background: #e8eaf0; }
.splitter { position: absolute; left: 0; top: calc(50% - 14px); width: 6px; height: 28px; background: #d0d3e6; border: 1px solid #6c7084; border-left: 0; }

.tabs { height: 25px; display: flex; background: #e0e3ea; padding-left: 2px; border-bottom: 1px solid #fff; }
.nav { width: 24px; height: 23px; border: 1px solid #8c8ea8; background: #b0b2ca; }
.tab { height: 22px; border: 2px solid #4c4e6c; border-top: 0; background: #babed2; width: 160px; padding-right: 14px; font: 17px/20px "Liberation Sans", sans-serif; }
.tab.on { height: 23px; width: 82px; margin-left: 4px; padding: 0; font-weight: 700; background: linear-gradient(#e4e6f2, #c8ccde); font-size: 18px; }
.status { height: 24px; display: flex; align-items: center; background: #a9b3bd; border-top: 1px solid #70747c; box-shadow: inset 0 1px #dfe3e8; padding: 2px 0 0 2px; }
.grow { flex: 1; white-space: nowrap; font-size: 17px; }
.notch { width: 5px; height: 20px; margin-right: 4px; border: 1px solid #777c86; border-right-color: #fff; border-bottom: 0; }
.cell { width: 94px; height: 21px; margin-right: 3px; text-align: center; border: 1px solid #777c86; border-color: #777c86 #fff #fff #777c86; line-height: 20px; white-space: nowrap; }
.units { width: 63px; text-align: right; margin-right: 10px; }
.help { width: 12px; height: 13px; margin: 0 50px 3px 17px; }
.tag { margin-right: 7px; }

.taskbar { width: 95px; flex: none; display: flex; flex-direction: column; background: #d4d0c8; border-left: 3px solid #fff; border-left-style: double; padding: 2px 0 3px; }
.start { width: 74px; height: 55px; font-weight: 700; gap: 1px; border: 2px solid; border-color: #fff #404040 #404040 #fff; margin-bottom: 3px; }
.pin { height: 56px; padding-left: 4px; }
.run { width: 84px; height: 53px; margin: 0 3px 2px 5px; justify-content: flex-start; gap: 8px; padding-left: 2px; border: 2px solid; border-color: #fff #404040 #404040 #fff; }
.run:not(:has(span)) { justify-content: center; }
.run.alert { background: #0a246a; color: #d4d0c8; }
.run.current { background: #fff; font-weight: 700; border-color: #404040 #fff #fff #404040; }
.desk-label { margin-top: auto; text-align: center; font-size: 17px; }
.desk-more { text-align: center; font-weight: 700; margin: 6px 6px 2px 0; }
.tray { height: 257px; margin: 0 3px 0 1px; border: 1px solid; border-color: #808080 #fff #fff #808080; display: flex; flex-direction: column; align-items: center; flex: none; }
.tray-icons { display: grid; grid-template-columns: 36px 36px; grid-auto-rows: 36px; place-items: center; height: 182px; padding-right: 10px; }
time { line-height: 23px; }
.tray > svg { margin-top: 3px; }
</style>
